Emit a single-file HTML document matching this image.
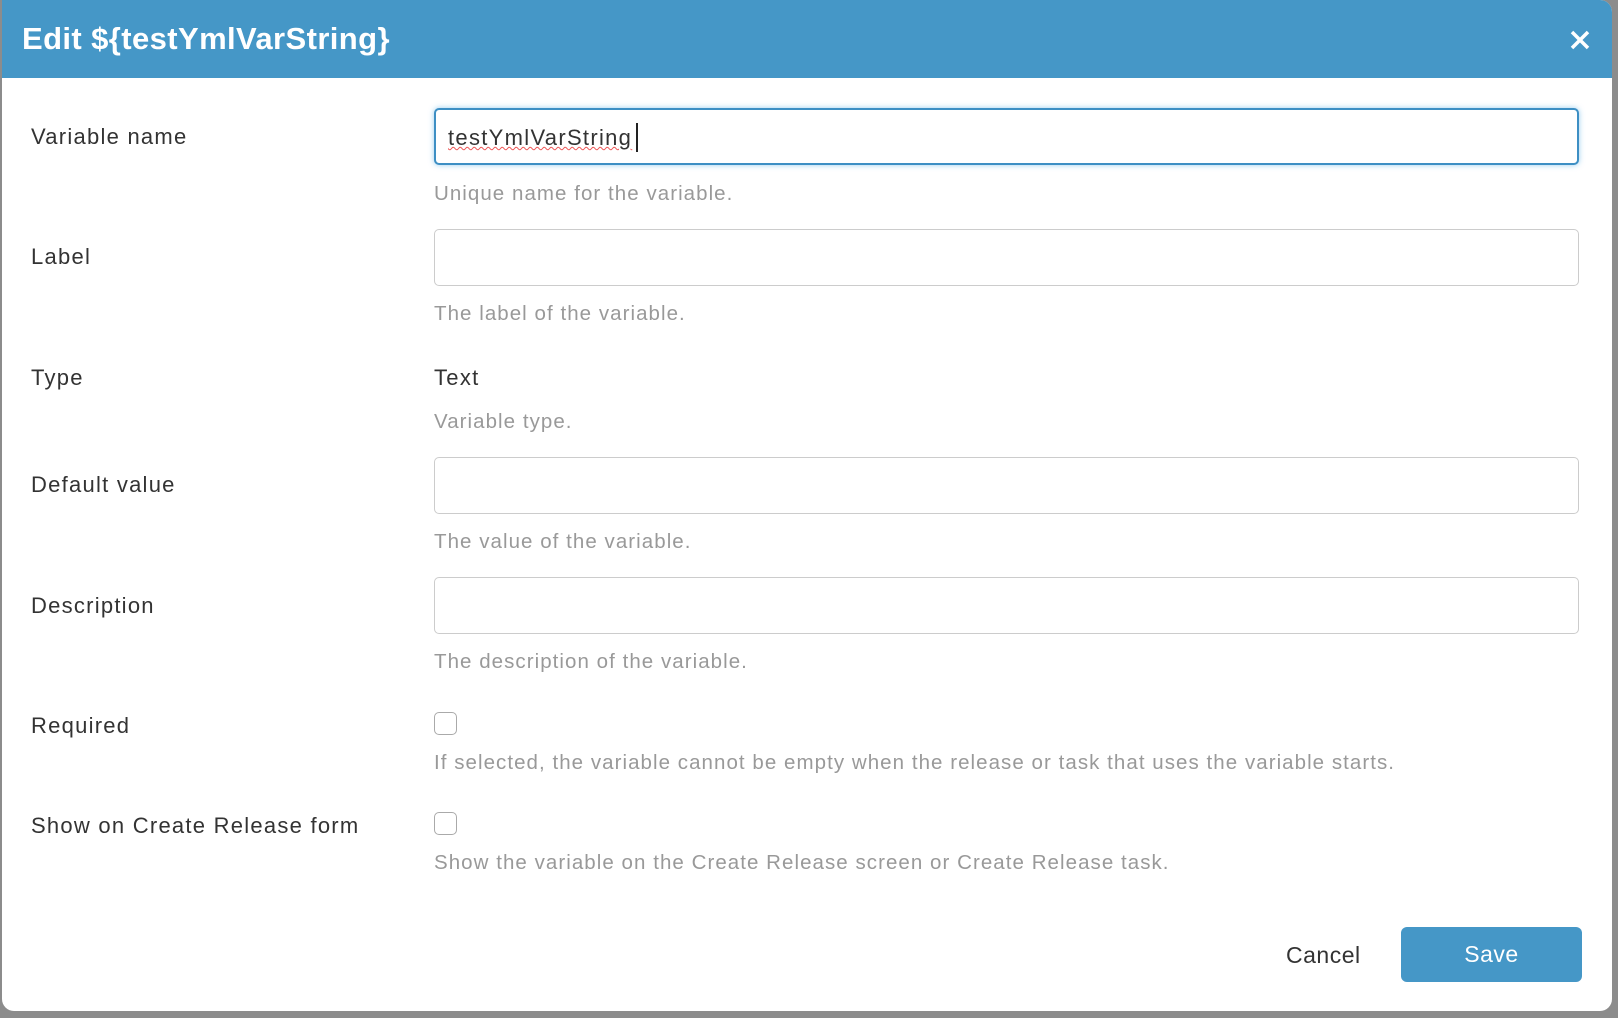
<!DOCTYPE html>
<html><head><meta charset="utf-8"><style>
html,body{margin:0;padding:0;}
body{width:1618px;height:1018px;background:#8c8c8c;position:relative;overflow:hidden;font-family:"Liberation Sans",sans-serif;}
.dlg{position:absolute;left:2px;top:0;width:1610px;height:1011px;background:#fff;border-radius:0 12px 12px 12px;overflow:hidden;}
.hdr{position:absolute;left:0;top:0;width:100%;height:78px;background:#4597c7;}
.title{position:absolute;left:20px;top:19px;color:#fff;font-size:31px;font-weight:bold;line-height:40px;letter-spacing:0.4px;}
.x{position:absolute;left:1567px;top:29px;}
.lbl{position:absolute;left:29px;font-size:22px;color:#333;line-height:26px;letter-spacing:1.25px;white-space:nowrap;}
.inp{position:absolute;left:432px;width:1145px;height:57px;border:1px solid #ccc;border-radius:5px;box-sizing:border-box;background:#fff;}
.inp.f{border:2px solid #3d8fc4;box-shadow:0 0 6px rgba(80,170,230,.6);}
.help{position:absolute;left:432px;font-size:20.5px;color:#999;line-height:24px;white-space:nowrap;letter-spacing:1.05px;}
.cb{position:absolute;left:432px;width:23px;height:23px;border:1px solid #aaa;border-radius:5px;box-sizing:border-box;}
.val{position:absolute;font-size:22px;color:#333;line-height:26px;letter-spacing:1.3px;white-space:nowrap;}
.save{position:absolute;left:1399px;top:927px;width:181px;height:55px;background:#4597c7;border-radius:6px;color:#fff;font-size:23px;text-align:center;line-height:55px;letter-spacing:0.5px;}
.cancel{position:absolute;left:1284px;top:941px;font-size:23px;color:#333;line-height:28px;letter-spacing:0.5px;}
</style></head><body>
<div class="dlg">
<div class="hdr"><div class="title">Edit ${testYmlVarString}</div>
<svg class="x" width="22" height="22" viewBox="0 0 22 22"><path d="M3 3L19 19M19 3L3 19" stroke="#fff" stroke-width="3.5"/></svg></div>

<div class="lbl" style="top:124px">Variable name</div>
<div class="inp f" style="top:108px"></div>
<div class="val" style="left:446px;top:125px;text-decoration:underline wavy #e55;text-decoration-thickness:1px;">testYmlVarString</div>
<div style="position:absolute;left:634px;top:123px;width:2px;height:29px;background:#222"></div>
<div class="help" style="top:182px">Unique name for the variable.</div>

<div class="lbl" style="top:244px">Label</div>
<div class="inp" style="top:229px"></div>
<div class="help" style="top:302px">The label of the variable.</div>

<div class="lbl" style="top:365px">Type</div>
<div class="val" style="left:432px;top:365px">Text</div>
<div class="help" style="top:410px">Variable type.</div>

<div class="lbl" style="top:472px">Default value</div>
<div class="inp" style="top:457px"></div>
<div class="help" style="top:530px">The value of the variable.</div>

<div class="lbl" style="top:593px">Description</div>
<div class="inp" style="top:577px"></div>
<div class="help" style="top:650px">The description of the variable.</div>

<div class="lbl" style="top:713px">Required</div>
<div class="cb" style="top:712px"></div>
<div class="help" style="top:751px">If selected, the variable cannot be empty when the release or task that uses the variable starts.</div>

<div class="lbl" style="top:813px">Show on Create Release form</div>
<div class="cb" style="top:812px"></div>
<div class="help" style="top:851px">Show the variable on the Create Release screen or Create Release task.</div>

<div class="cancel">Cancel</div>
<div class="save">Save</div>
</div>
</body></html>
